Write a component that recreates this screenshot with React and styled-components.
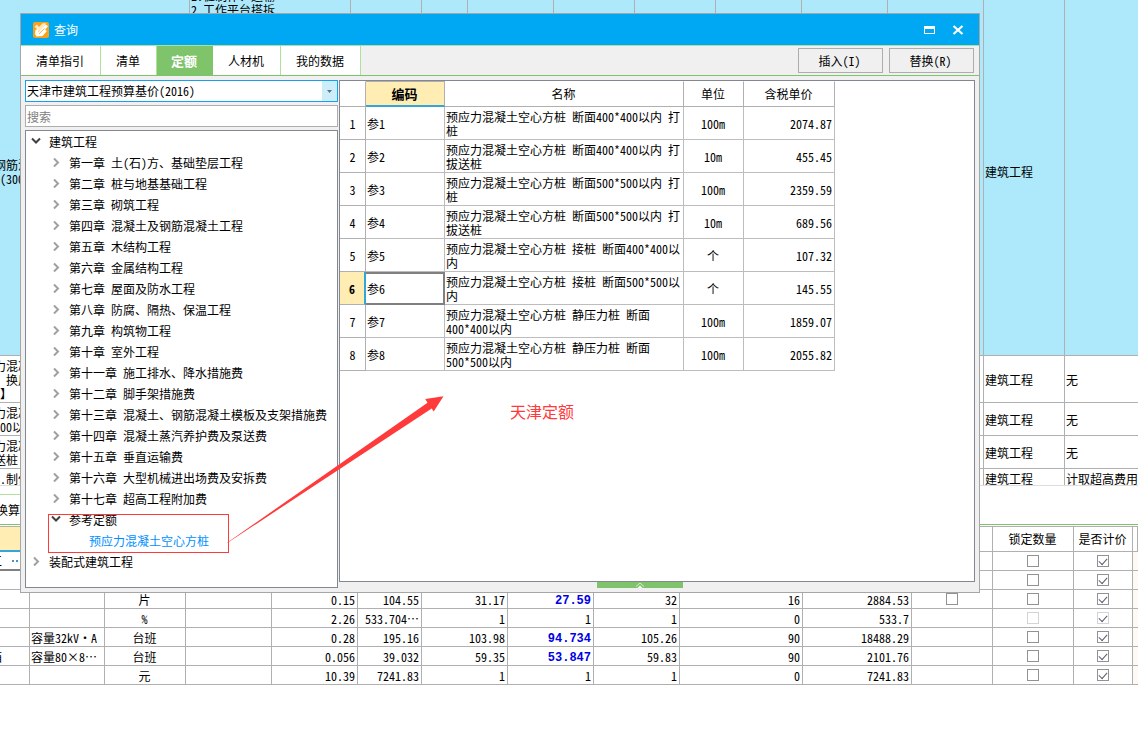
import React, { useState } from "react";
import styled, { createGlobalStyle, css } from "styled-components";

const GlobalStyle = createGlobalStyle`
  * {
    box-sizing: border-box;
  }

  body {
    margin: 0;
    background: #fff;
    color: #000;
  }

  body,
  button,
  input,
  select,
  table {
    font-family: "Noto Sans Mono CJK SC", "Noto Sans CJK SC", monospace;
    font-size: 12px;
    line-height: 14px;
  }
`;

const Page = styled.div`
  position: relative;
  min-height: 100vh;
  overflow: hidden;
`;

/* ---------- background grids ---------- */

const ListPane = styled.div`
  height: 486px;
  overflow: hidden;
  border-bottom: 1px solid #ddd;
`;

const Grid = styled.table`
  width: 100%;
  table-layout: fixed;
  border-collapse: separate;
  border-spacing: 0;
`;

const ListGrid = styled(Grid)`
  width: calc(100% + 8px);
  margin: -12px 0 0 -7px;
`;

const Row = styled.tr`
  height: ${(p) => p.$height}px;
  background: ${(p) => (p.$active ? "#ade9fb" : "transparent")};
`;

const cellPadding = {
  left: "1px 0 0 1px",
  center: "1px 1px 0 0",
  right: "1px 2px 0 0",
};

const Cell = styled.td`
  padding: ${(p) => cellPadding[p.$align || "left"]};
  border-right: 1px solid #b0b0b0;
  border-bottom: 1px solid #b0b0b0;
  text-align: ${(p) => p.$align || "left"};
  vertical-align: ${(p) => (p.$top ? "top" : "middle")};
  white-space: pre;
  overflow: hidden;
  ${(p) =>
    p.$strong &&
    css`
      padding-top: 3px;
      color: #0000e6;
      font-family: "Liberation Mono", monospace;
      font-weight: bold;
    `}
  ${(p) =>
    p.$scrolled &&
    css`
      text-indent: -11px;
    `}
  ${(p) =>
    p.$current &&
    css`
      border-bottom: 2px solid #808080;
    `}
`;

const HeadCell = styled.th`
  height: 26px;
  padding: 0 1px 0 0;
  border: 1px solid #b0b0b0;
  border-left: 0;
  font-weight: normal;
  ${(p) =>
    p.$current &&
    css`
      background: #ffedb3;
      border-bottom: 2px solid #35a4d8;
    `}
`;

const TailCell = styled(Cell)`
  border-right: 0;
  background: #fff9f5;
`;

const More = styled.svg`
  width: 20px;
  height: 2px;
  margin: 0 0 4px 8px;
  fill: #4a90c8;
`;

const SubTabs = styled.nav`
  display: flex;
  height: 39px;
  padding-top: 8px;
  margin-bottom: 1px;
  border-bottom: 1px solid #7fc36b;
`;

const SubTab = styled.button`
  width: 80px;
  margin-left: -4px;
  padding: 0;
  border: 0;
  border-top: 1px solid #aee29c;
  background: #fff;
  text-align: left;
`;

const Check = styled.input`
  appearance: none;
  display: block;
  width: 12px;
  height: 12px;
  margin: 0 auto 1px;
  border: 1px solid #929292;
  background: #fff;

  &:disabled {
    border-color: #d4d4d4;
  }

  &:checked::after {
    content: "";
    display: block;
    width: 7px;
    height: 4px;
    margin: 2px 0 0 1px;
    border: solid #5c5c70;
    border-width: 0 0 1px 1px;
    transform: rotate(-48deg);
  }
`;

/* ---------- query window ---------- */

const Window = styled.section`
  position: absolute;
  top: 13px;
  left: 20px;
  right: 158px;
  border: 1px solid #a6a6a6;
  background: #f0f0f0;
`;

const TitleBar = styled.header`
  display: flex;
  align-items: center;
  height: 31px;
  padding: 0 15px 0 12px;
  background: #00a8f3;
  color: #fff;
`;

const Title = styled.h1`
  flex: 1;
  margin: 0 0 0 5px;
  font-size: 12px;
  font-weight: normal;
`;

const WindowButton = styled.button`
  display: flex;
  margin-left: 17px;
  padding: 0;
  border: 0;
  background: none;
`;

const Toolbar = styled.div`
  display: flex;
  align-items: center;
  height: 31px;
  padding-right: 5px;
  border-top: 1px solid #aee29c;
  border-bottom: 1px solid #7fc36b;
`;

const Tabs = styled.nav`
  display: flex;
  flex: 1;
  align-self: stretch;
`;

const Tab = styled.button`
  padding: 0 16px 0 15px;
  border: 0;
  border-right: 1px solid #aee29c;
  background: #fff;
  color: #000;
  ${(p) =>
    p.$active &&
    css`
      padding: 0 15px 0 14px;
      background: #7fc36b;
      border-color: #7fc36b;
      color: #fff;
      font-size: 13px;
      font-weight: bold;
    `}
`;

const ActionButton = styled.button`
  width: 85px;
  height: 25px;
  margin-left: 6px;
  padding: 0 2px 0 0;
  border: 1px solid #adadad;
  background: #f0f0f0;
`;

const Content = styled.div`
  display: flex;
  gap: 1px;
  padding: 4px;
`;

const Side = styled.aside`
  display: flex;
  flex-direction: column;
  gap: 3px;
  width: 313px;
`;

const SelectBox = styled.label`
  display: grid;
  grid-template-columns: 1fr 15px;
  height: 22px;
  border: 1px solid #14a3ea;
  background: #fff;

  select {
    grid-area: 1 / 1 / 2 / 3;
    appearance: none;
    padding: 0 1px;
    border: 0;
    background: none;
    color: #000;
    outline: none;
  }

  svg {
    grid-area: 1 / 2 / 2 / 3;
    width: 15px;
    height: 20px;
    background: #cceefb;
    pointer-events: none;
  }
`;

const Search = styled.input`
  height: 22px;
  padding: 0 1px;
  border: 1px solid #adadad;
  background: #fff;
  outline: none;

  &::placeholder {
    color: #808080;
  }
`;

const Tree = styled.ul`
  flex: 1;
  min-height: 458px;
  margin: 0;
  padding: 0;
  border: 1px solid #828790;
  background: #fff;
  list-style: none;
`;

const TreeRow = styled.button`
  display: flex;
  align-items: center;
  gap: 8px;
  width: 100%;
  height: 21px;
  padding: 0 0 0 ${(p) => 5 + p.$level * 20}px;
  border: 0;
  background: none;
  color: ${(p) => (p.$active ? "#0090ff" : "#000")};
  white-space: nowrap;
`;

const Arrow = styled.svg`
  width: 10px;
  height: 10px;
  margin-bottom: 2px;
  fill: none;
  stroke: ${(p) => (p.$open ? "#404040" : "#a0a0a0")};
  stroke-width: 2;
`;

const Main = styled.div`
  display: flex;
  flex: 1;
  flex-direction: column;
  min-width: 0;
`;

const ResultPane = styled.div`
  flex: 1;
  border: 1px solid #828790;
  background: #fff;
`;

const ResultGrid = styled(Grid)`
  width: 495px;
`;

const ResultHead = styled(HeadCell)`
  border-top-color: ${(p) => (p.$current ? "#b0b0b0" : "#fff")};
  ${(p) =>
    p.$current &&
    css`
      font-size: 13px;
      font-weight: bold;
    `}
`;

const ResultCell = styled(Cell)`
  white-space: normal;
  border-color: #bdbdbd;
  ${(p) =>
    p.$selected &&
    css`
      border: 2px solid #808080;
      border-left: 0;
    `}
`;

const IndexCell = styled.th`
  padding: 1px 0 0;
  border-right: 1px solid #b0b0b0;
  border-bottom: 1px solid #b0b0b0;
  font-weight: normal;
  ${(p) =>
    p.$selected &&
    css`
      background: #ffedb3;
      border-right: 2px solid #35a4d8;
      font-weight: bold;
    `}
`;

const Collapse = styled.button`
  display: flex;
  justify-content: center;
  width: 86px;
  height: 6px;
  margin-left: 258px;
  padding: 0;
  border: 0;
  background: #7fc36b;
`;

/* ---------- marks drawn over the window ---------- */

const Marks = styled.svg`
  position: absolute;
  top: 0;
  left: 0;
  width: 600px;
  height: 600px;
  pointer-events: none;
`;

const Note = styled.p`
  position: absolute;
  top: 399px;
  left: 510px;
  margin: 0;
  color: #ff3a3a;
  font-size: 16px;
  line-height: 24px;
`;

const listColumns = [197, 161, 71, 46, 86, 81, 81, 86, 86, 96, 81];

const listRows = [
  {
    height: 368,
    active: true,
    name: "钢筋混\n (300",
    desc: "1.桩制作、运输\n2.工作平台搭拆",
    major: "建筑工程",
    fee: "",
  },
  { height: 47, name: "力混凝\n\u3000换用\n 】", major: "建筑工程", fee: "无" },
  { height: 33, name: "力混凝\n 00以内", major: "建筑工程", fee: "无" },
  { height: 33, name: "力混凝\n送桩", major: "建筑工程", fee: "无" },
  { height: 20, name: " .制作", major: "建筑工程", fee: "计取超高费用" },
];

const detailColumns = [30, 75, 81, 86, 86, 64, 86, 86, 86, 123, 109, 81, 81, 59];

const detailRows = [
  { cells: ["工"], current: true },
  { cells: [] },
  {
    cells: ["", "", "片", "", "0.15", "104.55", "31.17", "27.59", "32", "16", "2884.53"],
    strong: true,
    extra: true,
  },
  {
    cells: ["", "", "%", "", "2.26", "533.704…", "1", "1", "1", "0", "533.7"],
    disabled: true,
  },
  {
    cells: ["", "容量32kV·A", "台班", "", "0.28", "195.16", "103.98", "94.734", "105.26", "90", "18488.29"],
    strong: true,
  },
  {
    cells: ["箱", "容量80×8…", "台班", "", "0.056", "39.032", "59.35", "53.847", "59.83", "90", "2101.76"],
    strong: true,
  },
  { cells: ["", "", "元", "", "10.39", "7241.83", "1", "1", "1", "0", "7241.83"] },
];

const tabs = ["清单指引", "清单", "定额", "人材机", "我的数据"];

const tree = [
  { level: 0, text: "建筑工程", open: true },
  { level: 1, text: "第一章 土(石)方、基础垫层工程" },
  { level: 1, text: "第二章 桩与地基基础工程" },
  { level: 1, text: "第三章 砌筑工程" },
  { level: 1, text: "第四章 混凝土及钢筋混凝土工程" },
  { level: 1, text: "第五章 木结构工程" },
  { level: 1, text: "第六章 金属结构工程" },
  { level: 1, text: "第七章 屋面及防水工程" },
  { level: 1, text: "第八章 防腐、隔热、保温工程" },
  { level: 1, text: "第九章 构筑物工程" },
  { level: 1, text: "第十章 室外工程" },
  { level: 1, text: "第十一章 施工排水、降水措施费" },
  { level: 1, text: "第十二章 脚手架措施费" },
  { level: 1, text: "第十三章 混凝土、钢筋混凝土模板及支架措施费" },
  { level: 1, text: "第十四章 混凝土蒸汽养护费及泵送费" },
  { level: 1, text: "第十五章 垂直运输费" },
  { level: 1, text: "第十六章 大型机械进出场费及安拆费" },
  { level: 1, text: "第十七章 超高工程附加费" },
  { level: 1, text: "参考定额", open: true },
  { level: 2, text: "预应力混凝土空心方桩", leaf: true },
  { level: 0, text: "装配式建筑工程" },
];

const results = [
  ["参1", "预应力混凝土空心方桩 断面400*400以内 打桩", "100m", "2074.87"],
  ["参2", "预应力混凝土空心方桩 断面400*400以内 打拔送桩", "10m", "455.45"],
  ["参3", "预应力混凝土空心方桩 断面500*500以内 打桩", "100m", "2359.59"],
  ["参4", "预应力混凝土空心方桩 断面500*500以内 打拔送桩", "10m", "689.56"],
  ["参5", "预应力混凝土空心方桩 接桩 断面400*400以内", "个", "107.32"],
  ["参6", "预应力混凝土空心方桩 接桩 断面500*500以内", "个", "145.55"],
  ["参7", "预应力混凝土空心方桩 静压力桩 断面400*400以内", "100m", "1859.07"],
  ["参8", "预应力混凝土空心方桩 静压力桩 断面500*500以内", "100m", "2055.82"],
];

const Columns = ({ widths }) => (
  <colgroup>
    {widths.map((width, i) => (
      <col key={i} style={{ width }} />
    ))}
    <col />
  </colgroup>
);

const BillList = () => (
  <ListPane>
    <ListGrid>
      <Columns widths={listColumns} />
      <tbody>
        {listRows.map((row, i) => (
          <Row key={i} $height={row.height} $active={row.active}>
            <Cell>{row.name}</Cell>
            <Cell $top>{row.desc}</Cell>
            {listColumns.slice(2, 10).map((_, n) => (
              <Cell key={n} />
            ))}
            <Cell>{row.major}</Cell>
            <Cell>{row.fee}</Cell>
          </Row>
        ))}
      </tbody>
    </ListGrid>
  </ListPane>
);

const cellAlign = (i) => {
  if (i === 2) return "center";
  return i > 3 ? "right" : "left";
};

const DetailGrid = () => (
  <Grid>
    <Columns widths={detailColumns} />
    <thead>
      <tr>
        {detailColumns.map((_, i) => (
          <HeadCell key={i} $current={i === 0}>
            {i === 12 && "锁定数量"}
            {i === 13 && "是否计价"}
          </HeadCell>
        ))}
        <HeadCell />
      </tr>
    </thead>
    <tbody>
      {detailRows.map((row, r) => (
        <Row key={r} $height={19}>
          {detailColumns.slice(0, 11).map((_, i) => (
            <Cell
              key={i}
              $align={cellAlign(i)}
              $scrolled={i === 0}
              $strong={row.strong && i === 7}
              $current={row.current && i === 0}
            >
              {row.cells[i]}
              {row.current && i === 0 && (
                <More viewBox="0 0 20 2">
                  <path d="M2 0h2v2H2zM6 0h2v2H6zM10 0h2v2h-2z" />
                </More>
              )}
            </Cell>
          ))}
          <Cell $align="center">
            {row.extra && <Check type="checkbox" aria-label="暂估" />}
          </Cell>
          <Cell $align="center">
            <Check type="checkbox" aria-label="锁定数量" disabled={row.disabled} />
          </Cell>
          <Cell $align="center">
            <Check
              type="checkbox"
              aria-label="是否计价"
              defaultChecked
              disabled={row.disabled}
            />
          </Cell>
          <TailCell />
        </Row>
      ))}
    </tbody>
  </Grid>
);

const Logo = () => (
  <svg width="16" height="16" viewBox="0 0 16 16">
    <rect width="16" height="16" rx="2" fill="#f9a11b" />
    <path d="M1.500 4.500 4 2.500l2 2.500 4-4 3.500.5-6 7-2 .5z" fill="#ffe9bd" />
    <path
      d="M2.500 8l2.500-1 .5 3 7-7.500 2.500 1.500-3 4 2 1-4.500 5-6 .5L2 12z"
      fill="#fff"
    />
    <path d="M6 12l5.500-5.500" stroke="#f9b84f" />
  </svg>
);

const TreeItem = ({ item, active, onClick }) => (
  <li>
    <TreeRow $level={item.level} $active={active} onClick={onClick}>
      {item.leaf ? (
        <Arrow />
      ) : (
        <Arrow $open={item.open} viewBox="0 0 10 10">
          <path d={item.open ? "M1 2.500l4 4 4-4" : "M3 1.500l4 4-4 4"} />
        </Arrow>
      )}
      {item.text}
    </TreeRow>
  </li>
);

const Results = () => (
  <ResultGrid>
    <colgroup>
      {[26, 79, 239, 60, 91].map((width) => (
        <col key={width} style={{ width }} />
      ))}
    </colgroup>
    <thead>
      <tr>
        <ResultHead />
        <ResultHead $current>编码</ResultHead>
        <ResultHead>名称</ResultHead>
        <ResultHead>单位</ResultHead>
        <ResultHead>含税单价</ResultHead>
      </tr>
    </thead>
    <tbody>
      {results.map(([code, name, unit, price], i) => (
        <Row key={code} $height={33}>
          <IndexCell $selected={i === 5}>{i + 1}</IndexCell>
          <ResultCell $selected={i === 5}>{code}</ResultCell>
          <ResultCell>{name}</ResultCell>
          <ResultCell $align="center">{unit}</ResultCell>
          <ResultCell $align="right">{price}</ResultCell>
        </Row>
      ))}
    </tbody>
  </ResultGrid>
);

const QueryWindow = () => {
  const [tab, setTab] = useState("定额");
  const [node, setNode] = useState("预应力混凝土空心方桩");

  return (
    <Window>
      <TitleBar>
        <Logo />
        <Title>查询</Title>
        <WindowButton aria-label="最大化">
          <svg width="12" height="10" viewBox="0 0 12 10">
            <path d="M1 1h11v8H1z" fill="#fff" />
            <path d="M2 4h9v4H2z" fill="#00a8f3" />
          </svg>
        </WindowButton>
        <WindowButton aria-label="关闭">
          <svg width="12" height="10" viewBox="0 0 12 10">
            <path d="M1.500 1l9 8M10.500 1l-9 8" stroke="#fff" strokeWidth="2.200" />
          </svg>
        </WindowButton>
      </TitleBar>
      <Toolbar>
        <Tabs>
          {tabs.map((name) => (
            <Tab key={name} $active={name === tab} onClick={() => setTab(name)}>
              {name}
            </Tab>
          ))}
        </Tabs>
        <ActionButton>插入(I)</ActionButton>
        <ActionButton>替换(R)</ActionButton>
      </Toolbar>
      <Content>
        <Side>
          <SelectBox>
            <select aria-label="定额库">
              <option>天津市建筑工程预算基价(2016)</option>
            </select>
            <svg viewBox="0 0 15 20">
              <path d="M5 9h5l-2.500 3z" fill="#5f7480" />
            </svg>
          </SelectBox>
          <Search placeholder="搜索" aria-label="搜索" />
          <Tree>
            {tree.map((item) => (
              <TreeItem
                key={item.text}
                item={item}
                active={item.text === node}
                onClick={() => setNode(item.text)}
              />
            ))}
          </Tree>
        </Side>
        <Main>
          <ResultPane>
            <Results />
          </ResultPane>
          <Collapse aria-label="收起">
            <svg width="10" height="6" viewBox="0 0 10 6">
              <path d="M1 4.500 5 1l4 3.500" fill="none" stroke="#d5efcc" />
              <path d="M2.500 6 5 3.500 7.500 6z" fill="#fff" />
            </svg>
          </Collapse>
        </Main>
      </Content>
    </Window>
  );
};

const App = () => (
  <>
    <GlobalStyle />
    <Page>
      <BillList />
      <SubTabs>
        <SubTab>换算</SubTab>
      </SubTabs>
      <DetailGrid />
      <QueryWindow />
      <Marks viewBox="0 0 600 600">
        <rect x="48.500" y="514.500" width="180" height="38" fill="none" stroke="#ff3a3a" />
        <path
          d="M226.700 543 427.500 402.700 425.300 399 443.500 396.300 433.700 411.500 431.700 408.500 228 542.500z"
          fill="#ff3a3a"
        />
      </Marks>
      <Note>天津定额</Note>
    </Page>
  </>
);

export default App;
